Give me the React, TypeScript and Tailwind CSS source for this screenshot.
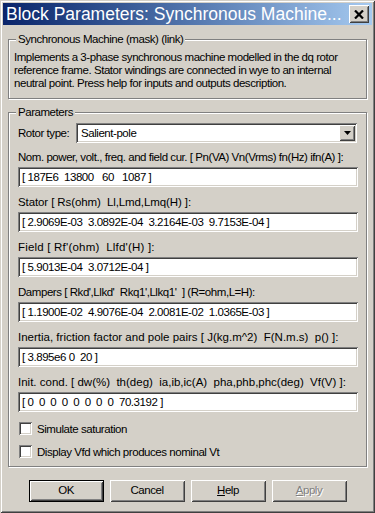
import React from 'react';

const font = { fontFamily: '"Liberation Sans", Arial, sans-serif' };

const sunken =
  'shadow-[inset_1px_1px_0_#808080,inset_-1px_-1px_0_#ffffff,inset_2px_2px_0_#404040,inset_-2px_-2px_0_#d4d0c8]';
const raised =
  'shadow-[inset_1px_1px_0_#ffffff,inset_-1px_-1px_0_#404040,inset_2px_2px_0_#d4d0c8,inset_-2px_-2px_0_#808080]';

type Field = { label: string; value: string; labelCls: string };

const fields: Field[] = [
  {
    label: 'Nom. power, volt., freq. and field cur. [ Pn(VA) Vn(Vrms) fn(Hz) ifn(A) ]:',
    value: '[ 187E6  13800   60   1087 ]',
    labelCls: 'tracking-[-0.45px]',
  },
  {
    label: 'Stator [ Rs(ohm)  Ll,Lmd,Lmq(H) ]:',
    value: '[ 2.9069E-03  3.0892E-04  3.2164E-03  9.7153E-04 ]',
    labelCls: 'tracking-[-0.1px]',
  },
  {
    label: "Field [ Rf'(ohm)  Llfd'(H) ]:",
    value: '[ 5.9013E-04  3.0712E-04 ]',
    labelCls: 'tracking-[0.2px]',
  },
  {
    label: "Dampers [ Rkd',Llkd'  Rkq1',Llkq1'  ] (R=ohm,L=H):",
    value: '[ 1.1900E-02  4.9076E-04  2.0081E-02  1.0365E-03 ]',
    labelCls: 'tracking-[-0.45px]',
  },
  {
    label: 'Inertia, friction factor and pole pairs [ J(kg.m^2)  F(N.m.s)  p() ]:',
    value: '[ 3.895e6 0  20 ]',
    labelCls: 'tracking-[0px]',
  },
  {
    label: 'Init. cond. [ dw(%)  th(deg)  ia,ib,ic(A)  pha,phb,phc(deg)  Vf(V) ]:',
    value: '[ 0  0  0  0  0  0  0  0  70.3192 ]',
    labelCls: 'tracking-[0px]',
  },
];

const GroupBox = ({ title, children, className }: { title: string; children: React.ReactNode; className: string }) => (
  <div className={`relative border border-[#808080] shadow-[inset_1px_1px_0_#ffffff,1px_1px_0_#ffffff] ${className}`}>
    <span className="absolute -top-[8px] left-[7px] bg-[#d4d0c8] px-[2px] leading-[14px] whitespace-nowrap">{title}</span>
    {children}
  </div>
);

const Checkbox = ({ label }: { label: string }) => (
  <div className="flex items-center h-[13px]">
    <div className={`ml-[1px] w-[13px] h-[13px] bg-white ${sunken}`}></div>
    <span className="ml-[5px] leading-[14px] whitespace-nowrap">{label}</span>
  </div>
);

const Button = ({ children, isDefault }: { children: React.ReactNode; isDefault?: boolean }) =>
  isDefault ? (
    <div className="w-[75px] h-[22px] border border-black">
      <div className={`w-full h-full flex items-center justify-center ${raised}`}>{children}</div>
    </div>
  ) : (
    <div className={`w-[75px] h-[22px] flex items-center justify-center ${raised}`}>{children}</div>
  );

export default function App() {
  return (
    <div
      style={font}
      className={`w-[375px] h-[513px] bg-[#d4d0c8] p-[3px] text-[11.5px] tracking-[-0.45px] text-black shadow-[inset_1px_1px_0_#d4d0c8,inset_-1px_-1px_0_#404040,inset_2px_2px_0_#ffffff,inset_-2px_-2px_0_#808080] flex flex-col`}
    >
      {/* title bar */}
      <div className="h-[22px] flex items-center bg-linear-to-r from-[#0a246a] to-[#a6caf0] pl-[3px] pr-[3px]">
        <span className="flex-1 text-white text-[17.5px] tracking-normal leading-[22px] whitespace-nowrap">
          Block Parameters: Synchronous Machine...
        </span>
        <div className={`w-[20px] h-[18px] bg-[#d4d0c8] flex items-center justify-center ${raised}`}>
          <svg width="10" height="9" viewBox="0 0 10 9">
            <path d="M1 0.5 L9 8.5 M9 0.5 L1 8.5" stroke="#000" strokeWidth="2.2" />
          </svg>
        </div>
      </div>

      <div className="px-[5px] flex flex-col">
        <GroupBox title="Synchronous Machine (mask) (link)" className="mt-[14px] pt-[11px] pl-[5px] pr-[4px] pb-[8px]">
          <p className="leading-[13px]">
            Implements a 3-phase synchronous machine modelled in the dq rotor reference frame. Stator windings are
            connected in wye to an internal neutral point. Press help for inputs and outputs description.
          </p>
        </GroupBox>

        <GroupBox title="Parameters" className="mt-[13px] pt-[10px] pl-[9px] pr-[8px] pb-[8px]">
          <div className="flex items-center h-[20px]">
            <span className="w-[58px] leading-[14px] whitespace-nowrap">Rotor type:</span>
            <div className={`flex-1 h-[20px] bg-white flex items-center pl-[5px] pr-[2px] mr-[1px] ${sunken}`}>
              <span className="flex-1 leading-[14px]">Salient-pole</span>
              <div className={`w-[16px] h-[16px] bg-[#d4d0c8] flex items-center justify-center ${raised}`}>
                <svg width="7" height="4" viewBox="0 0 7 4">
                  <path d="M0 0 H7 L3.5 4 Z" fill="#000" />
                </svg>
              </div>
            </div>
          </div>

          {fields.map((f) => (
            <div key={f.label} className="flex flex-col mt-[7px]">
              <div className={`h-[14px] leading-[14px] whitespace-pre ${f.labelCls}`}>{f.label}</div>
              <div className={`mt-[3px] h-[20px] bg-white flex items-center pl-[4px] ${sunken}`}>
                <span className="leading-[14px] whitespace-pre">{f.value}</span>
              </div>
              <div className="h-[1px]"></div>
            </div>
          ))}

          <div className="mt-[9px]">
            <Checkbox label="Simulate saturation" />
          </div>
          <div className="mt-[10px]">
            <Checkbox label="Display Vfd which produces nominal Vt" />
          </div>
        </GroupBox>

        <div className="mt-[13px] flex justify-center gap-[6px]">
          <Button isDefault>OK</Button>
          <Button>Cancel</Button>
          <Button>
            <span>
              <span className="underline">H</span>elp
            </span>
          </Button>
          <Button>
            <span className="text-[#808080] [text-shadow:1px_1px_0_#ffffff]">
              <span className="underline">A</span>pply
            </span>
          </Button>
        </div>
      </div>
    </div>
  );
}
